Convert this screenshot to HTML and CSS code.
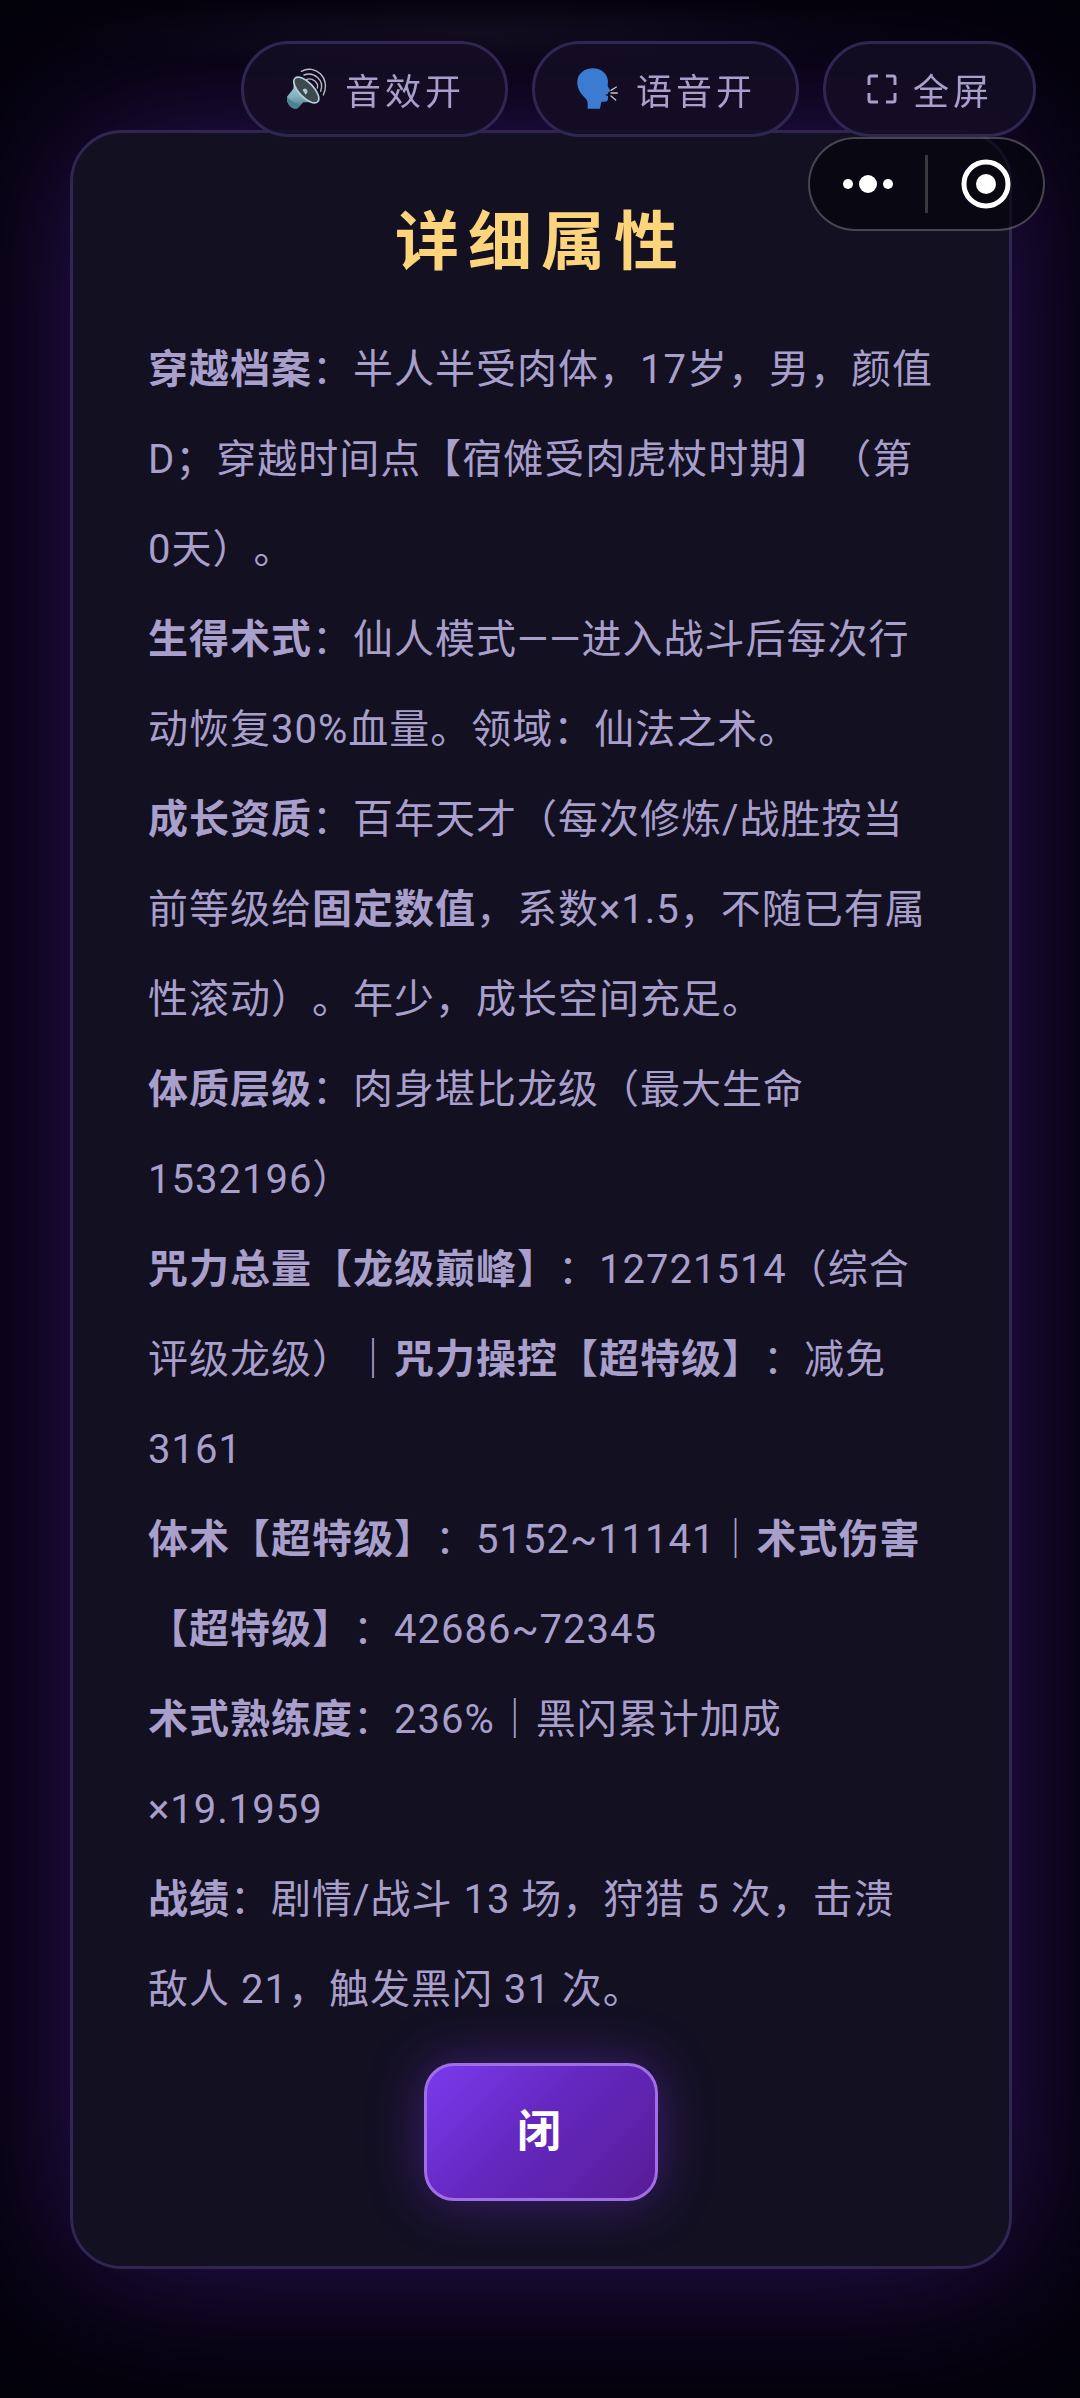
FILE: index.html
```html
<!DOCTYPE html>
<html lang="zh-CN">
<head>
  <meta charset="UTF-8" />
  <meta name="viewport" content="width=device-width, initial-scale=1.0" />
  <title>详细属性</title>
  <link rel="stylesheet" href="styles.css">
</head>
<body>

<div class="topbar">
  <button class="pill" type="button">
    <svg class="emoji" viewBox="-6 0 138 126" aria-hidden="true">
      <defs>
        <linearGradient id="horn" x1="0" y1="0" x2="0" y2="1">
          <stop offset="0" stop-color="#b4d3dd"/>
          <stop offset="0.6" stop-color="#84b0be"/>
          <stop offset="1" stop-color="#417687"/>
        </linearGradient>
      </defs>
      <path d="M25 30 L22 62 L3 86 Q0 112 24 122 Q34 124 39 117 L52 103 L95 103 Z" fill="url(#horn)"/>
      <path d="M3 86 Q14 102 39 107 L38 118 Q31 124 24 122 Q2 113 3 86Z" fill="#4b8292"/>
      <ellipse cx="61" cy="66" rx="49" ry="22" transform="rotate(46 61 66)" fill="#3d484f" stroke="#b5d2da" stroke-width="5"/>
      <path d="M50 67 Q54 58 62 64 Q68 72 59 80Z" fill="#a9c9d2"/>
      <g fill="none" stroke="#bcbcc8" stroke-width="4" stroke-linecap="round">
        <path d="M46 10 C86 -12 136 28 112 81"/>
        <path d="M54 21 C84 10 116 36 104 70"/>
        <path d="M61 34 C80 28 99 44 94 60"/>
      </g>
    </svg>
    <span>音效开</span>
  </button>
  <button class="pill" type="button">
    <svg class="emoji" viewBox="-6 0 138 126" aria-hidden="true">
      <path d="M48 1 C72 1 90 16 93 38 L92 54 L99 67 Q101 71 94 72 L93 78 L84 81 L93 84 L93 94 Q92 101 84 101 L73 101 L69 122 H32 V105 C30 90 13 84 5 64 C-9 28 14 1 48 1Z" fill="#3b7bd2"/>
      <path d="M102 67 L118 57 M102 75 H121 M102 84 L116 96" stroke="#c9c6bd" stroke-width="4" stroke-linecap="round"/>
    </svg>
    <span>语音开</span>
  </button>
  <button class="pill" type="button">
    <svg class="corners" viewBox="0 0 32 32" aria-hidden="true">
      <path d="M3 12 V5 Q3 3 5 3 H12 M20 3 H27 Q29 3 29 5 V12 M29 20 V27 Q29 29 27 29 H20 M12 29 H5 Q3 29 3 27 V20" fill="none" stroke="#a89fca" stroke-width="3"/>
    </svg>
    <span>全屏</span>
  </button>
</div>

<div class="capsule">
  <button class="capsule-btn" type="button" aria-label="更多">
    <svg class="dots" viewBox="0 0 50 50" aria-hidden="true">
      <circle cx="5" cy="25" r="5"/>
      <circle cx="25" cy="25" r="9"/>
      <circle cx="45" cy="25" r="5"/>
    </svg>
  </button>
  <button class="capsule-btn" type="button" aria-label="关闭">
    <svg class="target" viewBox="0 0 50 50" aria-hidden="true">
      <circle cx="25" cy="25" r="22" fill="none" stroke="#fff" stroke-width="5"/>
      <circle cx="25" cy="25" r="10"/>
    </svg>
  </button>
</div>

<div class="overlay">
  <main class="card">
    <h1 class="title">详细属性</h1>
    <div class="stats">
      <p><b>穿越档案</b>：半人半受肉体，17岁，男，颜值D；穿越时间点【宿傩受肉虎杖时期】（第0天）。</p>
      <p><b>生得术式</b>：仙人模式——进入战斗后每次行动恢复30%血量。领域：仙法之术。</p>
      <p><b>成长资质</b>：百年天才（每次修炼/战胜按当前等级给<b>固定数值</b>，系数×1.5，不随已有属性滚动）。年少，成长空间充足。</p>
      <p><b>体质层级</b>：肉身堪比龙级（最大生命1532196）</p>
      <p><b>咒力总量【龙级巅峰】</b>：12721514（综合评级龙级）｜<b>咒力操控【超特级】</b>：减免3161</p>
      <p><b>体术【超特级】</b>：5152~11141｜<b>术式伤害【超特级】</b>：42686~72345</p>
      <p><b>术式熟练度</b>：236%｜黑闪累计加成×19.1959</p>
      <p><b>战绩</b>：剧情/战斗 13 场，狩猎 5 次，击溃敌人 21，触发黑闪 31 次。</p>
    </div>
    <button class="close-btn" type="button">闭</button>
  </main>
</div>

</body>
</html>
```

FILE: styles.css
```css
* {
  box-sizing: border-box;
}
body {
  margin: 0;
  min-height: 100vh;
  background: #04020b;
  color: #a89fca;
  font-family: Roboto, "Noto Sans CJK SC", sans-serif;
  text-spacing-trim: space-all;
}
button {
  font-family: inherit;
  cursor: pointer;
}

/* floating controls */
.topbar {
  position: fixed;
  top: 41px;
  right: 44px;
  z-index: 10;
  display: flex;
  gap: 24px;
}
.pill {
  display: flex;
  align-items: center;
  gap: 15px;
  height: 96px;
  padding: 0 40px;
  border: 3px solid #2f2751;
  border-radius: 48px;
  background: rgba(19, 13, 36, 0.92);
  color: #a89fca;
  font-size: 36px;
  letter-spacing: 4px;
  white-space: nowrap;
}
.emoji {
  width: 46px;
  height: 42px;
}
.corners {
  width: 32px;
  height: 32px;
}
.capsule {
  position: fixed;
  top: 137px;
  right: 35px;
  z-index: 11;
  display: flex;
  width: 237px;
  height: 94px;
  padding: 16px 0;
  border: 2px solid rgba(255, 255, 255, 0.25);
  border-radius: 47px;
  background: rgba(5, 4, 10, 0.65);
}
.capsule-btn {
  flex: 1;
  display: flex;
  align-items: center;
  justify-content: center;
  padding: 0;
  border: none;
  background: none;
}
.capsule-btn + .capsule-btn {
  border-left: 3px solid #3a383f;
}
.capsule svg {
  width: 50px;
  height: 50px;
  fill: #fff;
}

/* dialog */
.overlay {
  display: flex;
  align-items: center;
  min-height: 100vh;
  padding: 0 68px 0 70px;
  overflow: hidden;
  background: radial-gradient(ellipse 420px 40px at 44% 32px, rgba(60, 52, 80, 0.2), transparent);
}
.card {
  flex: 1;
  display: flex;
  flex-direction: column;
  align-items: center;
  padding: 68px 75px 65px;
  border: 3px solid #2f2751;
  border-radius: 52px;
  background: #131022;
  box-shadow: 0 0 150px rgba(84, 36, 170, 0.5);
}
.title {
  margin: 0 0 40px;
  color: #fbd47c;
  font-size: 64px;
  font-weight: 700;
  line-height: 84px;
  letter-spacing: 9px;
}
.stats {
  width: 100%;
  font-size: 40px;
  line-height: 90px;
  letter-spacing: 1px;
}
.stats p {
  margin: 0;
}
.close-btn {
  margin-top: 28px;
  padding: 36px 90px;
  border: 3px solid #a06fe8;
  border-radius: 30px;
  background: linear-gradient(135deg, #7c3aed, #6428c0 45%, #581c96);
  box-shadow: 0 0 54px rgba(124, 58, 237, 0.4);
  color: #fff;
  font-size: 44px;
  font-weight: 700;
  line-height: 60px;
  letter-spacing: 4px;
}
```
